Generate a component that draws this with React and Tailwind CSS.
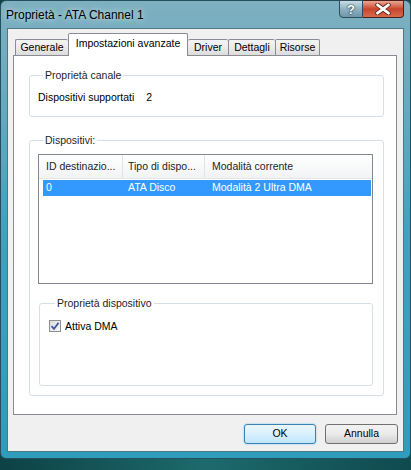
import React from "react";

const tabs = [
  { label: "Generale", w: "w-[53px]" },
  { label: "Impostazioni avanzate", w: "w-[120px]", active: true },
  { label: "Driver", w: "w-[40px]" },
  { label: "Dettagli", w: "w-[47px]" },
  { label: "Risorse", w: "w-[45px]", last: true },
];

const Group = ({ title, className = "", legendClass = "ml-[5px]", children }) => (
  <fieldset className={`border border-[#d5dfe5] rounded-[3px] ${className}`}>
    <legend className={`${legendClass} px-[2px] leading-[16px] text-[#1e1e1e]`}>{title}</legend>
    {children}
  </fieldset>
);

const TitleBar = () => (
  <div className="h-[27px] flex items-start justify-between pl-[5px] pr-[6px]">
    <span className="self-center text-[12px] leading-[16px] text-black font-['Liberation_Sans',Arial,sans-serif] [text-shadow:0_0_6px_rgba(255,255,255,0.9)]">
      Proprietà - ATA Channel 1
    </span>
    <div className="flex -mt-px">
      {/* help button */}
      <div className="w-[24px] h-[18px] rounded-bl-[4px] border border-[#2f4c5c] bg-gradient-to-b from-[#c9dde5] via-[#8fb1c0] to-[#6e97a9] flex items-center justify-center">
        <span className="text-white font-bold text-[13px] leading-none font-['Liberation_Sans',sans-serif] [text-shadow:0_0_2px_#1d3340,0_0_1px_#1d3340]">
          ?
        </span>
      </div>
      {/* close button */}
      <div className="w-[41px] h-[18px] rounded-br-[4px] border border-l-0 border-[#4a1f16] bg-gradient-to-b from-[#e9a792] via-[#c7452a] to-[#d76a4c] flex items-center justify-center">
        <svg width="16" height="12" viewBox="0 0 16 12">
          <path d="M2.5 1.8 L13.5 10.2 M13.5 1.8 L2.5 10.2" stroke="#5a1a0e" strokeWidth="4.4" strokeLinecap="round" />
          <path d="M2.5 1.8 L13.5 10.2 M13.5 1.8 L2.5 10.2" stroke="#ffffff" strokeWidth="2.8" strokeLinecap="round" />
        </svg>
      </div>
    </div>
  </div>
);

const Tabs = () => (
  <div className="h-[26px] pt-[4px] pl-[7px] flex items-end">
    {tabs.map((t, i) =>
      t.active ? (
        <div
          key={t.label}
          className={`${t.w} h-[23px] -mb-px relative z-10 bg-white border-x border-t border-[#898c95] rounded-t-[2px] flex items-center justify-center pb-[3px]`}
        >
          {t.label}
        </div>
      ) : (
        <div
          key={t.label}
          className={`${t.w} h-[16px] border-t ${i === 2 ? "" : "border-l"} ${t.last ? "border-r" : ""} border-[#898c95] rounded-t-[2px] bg-gradient-to-b from-[#f4f4f4] via-[#ebebeb] to-[#dcdcdc] flex items-center justify-center`}
        >
          {t.label}
        </div>
      )
    )}
  </div>
);

const ListView = () => (
  <div className="h-[130px] border border-[#828790] bg-white">
    <div className="h-[24px] flex bg-gradient-to-b from-white to-[#f2f3f5] border-b border-[#e5e5e5]">
      <div className="w-[84px] pl-[7px] flex items-center border-r border-[#e3e3e3] text-[#1e1e1e]">ID destinazio...</div>
      <div className="w-[82px] pl-[5px] flex items-center border-r border-[#e3e3e3] text-[#1e1e1e]">Tipo di dispo...</div>
      <div className="flex-1 pl-[7px] flex items-center text-[#1e1e1e]">Modalità corrente</div>
    </div>
    <div className="ml-[4px] mr-px mt-px h-[16px] flex items-center bg-[#3399ff] text-white">
      <div className="w-[80px] pl-[3px]">0</div>
      <div className="w-[82px] pl-[5px]">ATA Disco</div>
      <div className="flex-1 pl-[7px]">Modalità 2 Ultra DMA</div>
    </div>
  </div>
);

const Checkbox = () => (
  <div className="w-[12px] h-[12px] border border-[#8e8f8f] bg-gradient-to-br from-[#dcdcdc] to-[#f8f8f8] flex items-center justify-center">
    <svg width="10" height="10" viewBox="0 0 10 10">
      <path d="M1.5 5.2 L4 7.8 L8.6 1.8" fill="none" stroke="#3b5aa0" strokeWidth="1.8" />
    </svg>
  </div>
);

const Button = ({ children, focused }) => (
  <div
    className={`h-[20px] flex items-center justify-center rounded-[3px] border ${
      focused
        ? "w-[72px] border-[#3c7fb1] bg-gradient-to-b from-[#eaf6fd] via-[#d9f0fc] to-[#bee6fd] shadow-[0_0_2px_#6ec4f0]"
        : "w-[73px] border-[#707070] bg-gradient-to-b from-[#f2f2f2] via-[#ebebeb] to-[#cfcfcf]"
    }`}
  >
    {children}
  </div>
);

export default function App() {
  return (
    <div className="w-[411px] h-[470px] overflow-hidden bg-gradient-to-r from-[#0d4246] via-[#1d6a6c] to-[#0f4a4f] font-['Liberation_Sans',Arial,sans-serif] text-[10.5px] text-black">
      <div className="h-[459px] flex flex-col rounded-t-[6px] rounded-b-[6px] border border-[#24505e] bg-gradient-to-b from-[#7eb0c0] via-[#3fa2bf] to-[#2e9cba]">
        <TitleBar />
        <div className="flex-1 mx-[6px] mb-[6px] flex flex-col bg-[#f0f0f0] border border-[#4d7686]">
          <Tabs />
          <div className="flex-1 ml-[5px] mr-[6px] border border-[#898c95] bg-white flex flex-col">
            <Group title="Proprietà canale" className="ml-[15px] mr-[12px] mt-[11px] pl-[8px] pt-[6px] pb-[11px]">
              <div className="flex leading-[16px]">
                <span>Dispositivi supportati</span>
                <span className="ml-[12px]">2</span>
              </div>
            </Group>
            <Group title="Dispositivi:" className="ml-[15px] mr-[12px] mt-[15px] pl-[8px] pr-[10px] pb-[9px]">
              <div className="mt-[6px]">
                <ListView />
              </div>
              <Group
                title="Proprietà dispositivo"
                legendClass="ml-[6px]"
                className="ml-px mt-[11px] pl-[9px] pt-[7px] pb-[51px]"
              >
                <div className="flex items-center gap-[4px] leading-[16px]">
                  <Checkbox />
                  <span>Attiva DMA</span>
                </div>
              </Group>
            </Group>
          </div>
          <div className="flex justify-end gap-[9px] pr-[5px] mt-[9px] mb-[7px]">
            <Button focused>OK</Button>
            <Button>Annulla</Button>
          </div>
        </div>
      </div>
    </div>
  );
}
